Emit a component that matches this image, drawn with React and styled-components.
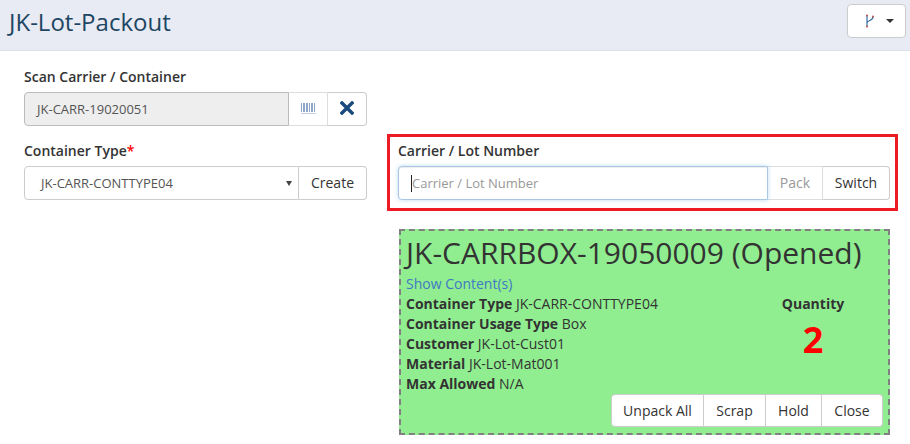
import React from "react";
import styled, { createGlobalStyle } from "styled-components";

const GlobalStyle = createGlobalStyle`
  html, body {
    margin: 0;
    padding: 0;
    background: #fff;
    font-family: "Open Sans", sans-serif;
    color: #333;
    overflow: hidden;
  }
`;

const Page = styled.div`
  width: 910px;
  height: 444px;
  overflow: hidden;
`;

const Header = styled.header`
  height: 51px;
  box-sizing: border-box;
  background: #e8ebf3;
  border-bottom: 1px solid #dfe2e8;
  display: flex;
  align-items: flex-start;
  justify-content: space-between;
  padding: 0 4px 0 9px;
`;

const Title = styled.h1`
  margin: 0;
  font-size: 24px;
  font-weight: 400;
  line-height: 44px;
  color: #1d4663;
`;

const BranchButton = styled.button`
  width: 59px;
  height: 34px;
  margin-top: 4px;
  box-sizing: border-box;
  background: #fff;
  border: 1px solid #ccc;
  border-radius: 4px;
  display: flex;
  align-items: center;
  justify-content: center;
  gap: 11px;
  padding: 0 0 0 5px;
`;

const Caret = styled.span`
  width: 0;
  height: 0;
  border-left: 4px solid transparent;
  border-right: 4px solid transparent;
  border-top: 4px solid #333;
`;

const Content = styled.main`
  display: flex;
  padding: 17px 20px 0 24px;
  gap: 31px;
`;

const LeftColumn = styled.section`
  width: 343px;
  flex: none;
  display: flex;
  flex-direction: column;
  gap: 16px;
`;

const RightColumn = styled.section`
  flex: 1;
  padding-top: 66px;
`;

const Label = styled.label`
  display: block;
  font-size: 14px;
  font-weight: 600;
  line-height: 18px;
  margin-bottom: 6px;
  color: #333;
`;

const Required = styled.span`
  color: #f00;
`;

const Group = styled.div`
  display: flex;
  height: 34px;
`;

const Field = styled.div`
  flex: 1;
  min-width: 0;
  box-sizing: border-box;
  height: 34px;
  display: flex;
  align-items: center;
  font-size: 13px;
  border: 1px solid ${(p) => (p.$focused ? "#a9c6e4" : p.$disabled ? "#bbb" : "#ccc")};
  border-radius: 4px 0 0 4px;
  background: ${(p) => (p.$disabled ? "#eee" : "#fff")};
  color: ${(p) => (p.$muted ? "#999" : "#555")};
  padding-left: ${(p) => p.$inset}px;
  box-shadow: ${(p) => (p.$focused ? "inset 0 1px 1px rgba(0,0,0,.075), 0 0 4px rgba(102,175,233,.45)" : "none")};
  position: relative;
`;

const TextCursor = styled.span`
  position: absolute;
  left: 12px;
  top: 8px;
  width: 1px;
  height: 17px;
  background: #222;
`;

const SelectArrow = styled.span`
  position: absolute;
  right: 6px;
  top: 14px;
  border-left: 3px solid transparent;
  border-right: 3px solid transparent;
  border-top: 5px solid #444;
`;

const AddonButton = styled.button`
  flex: none;
  width: ${(p) => p.$width}px;
  height: 34px;
  box-sizing: border-box;
  background: #fff;
  border: 1px solid ${(p) => (p.$faded ? "#ddd" : "#ccc")};
  border-left: none;
  font-family: inherit;
  font-size: 14px;
  color: ${(p) => (p.$faded ? "#999" : "#333")};
  padding: 0 0 2px;
  display: flex;
  align-items: center;
  justify-content: center;
  &:last-child {
    border-radius: 0 4px 4px 0;
  }
`;

const Highlight = styled.div`
  margin: 0 -8px 0 -11px;
  padding: 5px 5px 0 8px;
  border: 3px solid #ed1c24;
  height: 77px;
  box-sizing: border-box;
`;

const CarrierCard = styled.div`
  margin: 18px 0 0 1px;
  height: 206px;
  box-sizing: border-box;
  background: #90ee90;
  border: 2px dashed #808080;
  padding: 0 5px;
  display: flex;
  flex-direction: column;
`;

const CardTitle = styled.h2`
  margin: 0;
  font-size: 30px;
  font-weight: 400;
  line-height: 44px;
  color: #333;
  white-space: nowrap;
`;

const ShowLink = styled.a`
  display: block;
  font-size: 14px;
  line-height: 18px;
  color: #4178c4;
  margin-bottom: 1px;
`;

const CardBody = styled.div`
  display: flex;
`;

const Details = styled.dl`
  flex: 1;
  margin: 0;
`;

const DetailRow = styled.div`
  font-size: 14px;
  line-height: 20px;
  white-space: nowrap;
`;

const DetailKey = styled.dt`
  display: inline;
  font-weight: 700;
`;

const DetailValue = styled.dd`
  display: inline;
  margin: 0;
`;

const QuantityBox = styled.div`
  width: 102px;
  margin-right: 19px;
  text-align: center;
`;

const QuantityLabel = styled.div`
  font-size: 14px;
  font-weight: 700;
  line-height: 20px;
`;

const QuantityValue = styled.div`
  font-size: 36px;
  font-weight: 700;
  line-height: 50px;
  margin-top: 1px;
  color: #f00;
`;

const CardActions = styled.div`
  display: flex;
  justify-content: flex-end;
`;

const CardButton = styled.button`
  height: 33px;
  width: ${(p) => p.$width}px;
  box-sizing: border-box;
  background: #fff;
  border: 1px solid #ccc;
  border-left: none;
  font-family: inherit;
  font-size: 14px;
  color: #333;
  padding: 0;
  &:first-child {
    border-left: 1px solid #ccc;
    border-radius: 4px 0 0 4px;
  }
  &:last-child {
    border-radius: 0 4px 4px 0;
  }
`;

const BranchIcon = () => (
  <svg width="10" height="14" viewBox="0 0 10 14" fill="none">
    <path d="M2 1v12M2 9c0-3 6-2 6-6" stroke="#3a6ea5" strokeWidth="1.2" />
    <circle cx="2" cy="1.5" r="1" fill="#c0504d" />
    <circle cx="8" cy="2.5" r="1" fill="#c0504d" />
    <circle cx="2" cy="12.5" r="1" fill="#c0504d" />
  </svg>
);

const BarcodeIcon = () => (
  <svg width="15" height="11" viewBox="0 0 15 11">
    {[0, 2, 3, 5, 6, 8, 10, 11, 13].map((x) => (
      <rect key={x} x={x} y="0" width="1" height="9" fill="#8fa8c8" />
    ))}
    <rect x="0" y="10" width="15" height="1" fill="#c3cfe0" />
  </svg>
);

const CloseIcon = () => (
  <svg width="14" height="14" viewBox="0 0 14 14">
    <path d="M2 2l10 10M12 2L2 12" stroke="#1b4a7d" strokeWidth="3.4" strokeLinecap="square" />
  </svg>
);

const details = [
  ["Container Type", "JK-CARR-CONTTYPE04"],
  ["Container Usage Type", "Box"],
  ["Customer", "JK-Lot-Cust01"],
  ["Material", "JK-Lot-Mat001"],
  ["Max Allowed", "N/A"],
];

export default function App() {
  return (
    <Page>
      <GlobalStyle />
      <Header>
        <Title>JK-Lot-Packout</Title>
        <BranchButton>
          <BranchIcon />
          <Caret />
        </BranchButton>
      </Header>
      <Content>
        <LeftColumn>
          <div>
            <Label>Scan Carrier / Container</Label>
            <Group>
              <Field $disabled $inset={12}>JK-CARR-19020051</Field>
              <AddonButton $width={39} $faded><BarcodeIcon /></AddonButton>
              <AddonButton $width={39}><CloseIcon /></AddonButton>
            </Group>
          </div>
          <div>
            <Label>Container Type<Required>*</Required></Label>
            <Group>
              <Field $inset={16}>JK-CARR-CONTTYPE04<SelectArrow /></Field>
              <AddonButton $width={68}>Create</AddonButton>
            </Group>
          </div>
        </LeftColumn>
        <RightColumn>
          <Highlight>
            <Label>Carrier / Lot Number</Label>
            <Group>
              <Field $focused $muted $inset={13}><TextCursor />Carrier / Lot Number</Field>
              <AddonButton $width={55} $faded>Pack</AddonButton>
              <AddonButton $width={67}>Switch</AddonButton>
            </Group>
          </Highlight>
          <CarrierCard>
            <CardTitle>JK-CARRBOX-19050009 (Opened)</CardTitle>
            <ShowLink>Show Content(s)</ShowLink>
            <CardBody>
              <Details>
                {details.map(([key, value]) => (
                  <DetailRow key={key}>
                    <DetailKey>{key}</DetailKey> <DetailValue>{value}</DetailValue>
                  </DetailRow>
                ))}
              </Details>
              <QuantityBox>
                <QuantityLabel>Quantity</QuantityLabel>
                <QuantityValue>2</QuantityValue>
              </QuantityBox>
            </CardBody>
            <CardActions>
              <CardButton $width={93}>Unpack All</CardButton>
              <CardButton $width={62}>Scrap</CardButton>
              <CardButton $width={56}>Hold</CardButton>
              <CardButton $width={61}>Close</CardButton>
            </CardActions>
          </CarrierCard>
        </RightColumn>
      </Content>
    </Page>
  );
}
